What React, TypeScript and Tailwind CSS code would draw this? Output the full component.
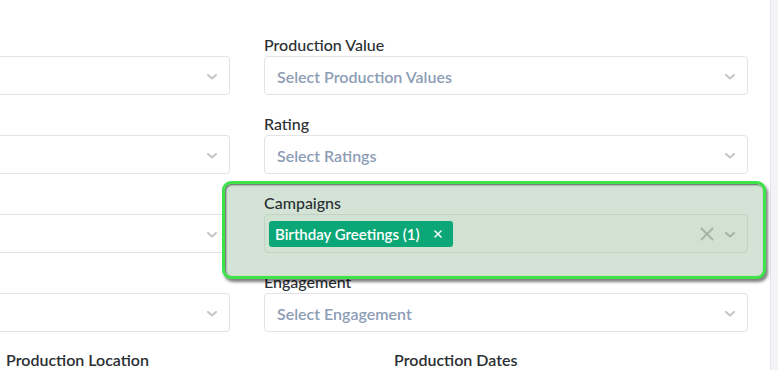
import { X } from "lucide-react";

const Chevron = ({ className = "" }: { className?: string }) => (
  <svg
    width="10"
    height="6"
    viewBox="0 0 10 6"
    fill="none"
    className={className}
  >
    <path
      d="M1 1l4 3.5L9 1"
      stroke="currentColor"
      strokeWidth="2"
      strokeLinecap="round"
      strokeLinejoin="round"
    />
  </svg>
);

const LeftSelect = ({ last = false }: { last?: boolean }) => (
  <div
    className={`h-[39px] ${last ? "" : "mb-[40px]"} flex items-center justify-end pr-[12px] bg-white border border-l-0 border-[#e3e4ea] rounded-r-[4px]`}
  >
    <Chevron className="text-[#c4c4c4] mt-[2px]" />
  </div>
);

const Field = ({ label, placeholder }: { label: string; placeholder: string }) => (
  <div className="mb-[19px]">
    <div className="h-[20px] leading-[20px] text-[16px] font-medium text-[#2b2f33] mb-px">
      {label}
    </div>
    <div className="h-[39px] flex items-center justify-between pl-[12px] pr-[12px] bg-white border border-[#e3e4ea] rounded-[4px]">
      <span className="text-[16px] font-semibold text-[#8d9db6] pt-[3px]">{placeholder}</span>
      <Chevron className="text-[#c4c4c4] mt-[2px]" />
    </div>
  </div>
);

export default function App() {
  return (
    <div
      className="w-[778px] h-[370px] overflow-hidden bg-white flex"
      style={{ fontFamily: "Lato, 'Noto Sans', sans-serif" }}
    >
      <div className="w-[770px] flex flex-col">
        <div className="flex items-start gap-[34px] pt-[56px]">
          <div className="w-[230px] shrink-0">
            <LeftSelect />
            <LeftSelect />
            <LeftSelect />
            <LeftSelect last />
          </div>
          <div className="w-[484px] shrink-0 -mt-[21px]">
            <Field label="Production Value" placeholder="Select Production Values" />
            <Field label="Rating" placeholder="Select Ratings" />
            <div className="relative mb-[19px]">
              <div className="absolute -top-[12px] -left-[42px] -right-[18px] -bottom-[26px] z-10 bg-[#d3e4d6] border-[3px] border-[#3ee34a] rounded-[9px] shadow-[2px_3px_3px_rgba(0,0,0,0.5),inset_1px_1px_2px_rgba(0,0,0,0.6)]" />
              <div className="relative z-20">
                <div className="h-[20px] leading-[20px] text-[16px] font-medium text-[#2b2f33] mb-px">
                  Campaigns
                </div>
                <div className="h-[39px] flex items-center justify-between pl-[4px] pr-[12px] bg-[#d1e2d3] border border-[#c3d4c6] rounded-[4px]">
                  <div className="h-[26px] flex items-center gap-[12px] pl-[6px] pr-[9px] bg-[#0ba776] rounded-[3px] text-white text-[15px] font-semibold">
                    <span className="pt-px">Birthday Greetings (1)</span>
                    <X size={12} strokeWidth={3} />
                  </div>
                  <div className="flex items-center gap-[7px] text-[#a4b4a7]">
                    <X size={22} strokeWidth={2.2} />
                    <Chevron className="mt-[2px]" />
                  </div>
                </div>
              </div>
            </div>
            <Field label="Engagement" placeholder="Select Engagement" />
          </div>
        </div>
        <div className="flex -mt-px text-[16px] font-semibold text-[#2b2f33] leading-[20px]">
          <span className="pl-[6px] w-[394px]">Production Location</span>
          <span>Production Dates</span>
        </div>
      </div>
      <div className="w-[8px] bg-[#f4f4f6] border-l border-[#e6e6ea]" />
    </div>
  );
}
